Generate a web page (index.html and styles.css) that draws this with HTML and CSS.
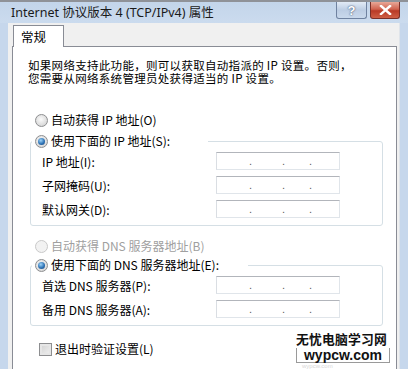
FILE: index.html
```html
<!DOCTYPE html>
<html lang="zh">
<head>
    <meta charset="utf-8">
    <title>Internet 协议版本 4 (TCP/IPv4) 属性</title>
    <link rel="stylesheet" href="styles.css">
</head>
<body>
    <div class="topline"></div>
    <div class="titlebar">
        <span class="title">Internet 协议版本 4 (TCP/IPv4) 属性</span>
        <div class="title-buttons">
            <div class="btn-help">?</div>
            <div class="btn-close">
                <svg width="13" height="10" viewBox="0 0 13 10"><path d="M2 1 L11 9 M11 1 L2 9" stroke="#fff" stroke-width="2.4" stroke-linecap="square"/></svg>
            </div>
        </div>
    </div>
    <div class="client">
        <div class="tab">常规</div>
        <div class="panel">
            <p class="intro">如果网络支持此功能，则可以获取自动指派的 IP 设置。否则，<br>您需要从网络系统管理员处获得适当的 IP 设置。</p>

            <div class="opt opt-first"><span class="radio"></span>自动获得 IP 地址(O)</div>
            <div class="group">
                <div class="opt group-head ip-head"><span class="radio checked"></span>使用下面的 IP 地址(S):</div>
                <div class="row row-first"><span class="label">IP 地址(I):</span><div class="ipbox"><i>.</i><i>.</i><i>.</i></div></div>
                <div class="row"><span class="label">子网掩码(U):</span><div class="ipbox"><i>.</i><i>.</i><i>.</i></div></div>
                <div class="row"><span class="label">默认网关(D):</span><div class="ipbox"><i>.</i><i>.</i><i>.</i></div></div>
            </div>

            <div class="opt opt-dns disabled"><span class="radio"></span>自动获得 DNS 服务器地址(B)</div>
            <div class="group group-dns">
                <div class="opt group-head dns-head"><span class="radio checked"></span>使用下面的 DNS 服务器地址(E):</div>
                <div class="row row-first"><span class="label">首选 DNS 服务器(P):</span><div class="ipbox"><i>.</i><i>.</i><i>.</i></div></div>
                <div class="row"><span class="label">备用 DNS 服务器(A):</span><div class="ipbox"><i>.</i><i>.</i><i>.</i></div></div>
            </div>

            <div class="opt opt-check"><span class="checkbox"></span>退出时验证设置(L)</div>
        </div>
    </div>
    <div class="watermark">
        <div class="wm-cn">无忧电脑学习网</div>
        <div class="wm-en">wypcw.com</div>
        <div class="wm-shadow">wypcw.com</div>
    </div>
</body>
</html>
```

FILE: styles.css
```css
body {
    margin: 0;
    width: 408px;
    height: 369px;
    overflow: hidden;
    background: #c6d7ec;
    font-family: "Noto Sans CJK SC", sans-serif;
    font-size: 12px;
    color: #000;
    position: relative;
}
.topline {
    height: 2px;
    background: #8f9298;
}
.titlebar {
    height: 21px;
    display: flex;
    justify-content: space-between;
    padding: 0 8px 0 11px;
    background: linear-gradient(#c3d5ea, #cbdbee);
}
.title {
    font-family: "Noto Sans", "Noto Sans CJK SC", sans-serif;
    font-size: 12.5px;
    line-height: 21px;
    color: #1a1a1a;
}
.title-buttons {
    display: flex;
    gap: 3px;
}
.btn-help, .btn-close {
    height: 16px;
    border-radius: 0 0 3px 3px;
    border: 1px solid #6f82a0;
    border-top: none;
    display: flex;
    align-items: center;
    justify-content: center;
}
.btn-help {
    width: 29px;
    background: linear-gradient(#e2ebf6, #bccde3 50%, #c9d9ec);
    color: #fff;
    font-family: "Liberation Sans", sans-serif;
    font-weight: bold;
    font-size: 13px;
    text-shadow: 0 0 2px #4d5f7c, 0 0 1px #4d5f7c;
}
.btn-close {
    width: 28px;
    border-color: #7a2f28;
    background: linear-gradient(#e8a797, #d0634f 45%, #b93a26 55%, #cf5f45);
}
.client {
    margin: 0 8px;
    height: 346px;
    background: #f0f0f0;
    padding: 2px 2px 0 4px;
    box-sizing: border-box;
    border-right: 1px solid #dfe4ea;
}
.tab {
    width: 51px;
    height: 22px;
    margin-left: 1px;
    margin-bottom: -1px;
    box-sizing: border-box;
    border: 1px solid #898c95;
    border-bottom: none;
    background: #fff;
    position: relative;
    padding-left: 7px;
    line-height: 21px;
    font-size: 12.5px;
}
.panel {
    background: #fff;
    border: 1px solid #898c95;
    border-bottom: none;
    height: 330px;
}
.intro {
    margin: 12px 0 0 15px;
    font-size: 11.5px;
    line-height: 13px;
    letter-spacing: 0.3px;
}
.opt {
    display: flex;
    align-items: center;
    height: 14px;
    line-height: 14px;
    white-space: nowrap;
}
.opt-first {
    margin: 28px 0 0 22px;
}
.opt-dns {
    margin: 13px 0 0 22px;
}
.disabled {
    color: #a0a0a0;
}
.radio {
    width: 11px;
    height: 11px;
    border-radius: 50%;
    border: 1px solid #8d8e90;
    background: radial-gradient(circle at 45% 40%, #fbfbfb, #dadada 70%, #cfcfcf);
    margin-right: 3px;
    display: flex;
    align-items: center;
    justify-content: center;
    flex: none;
}
.disabled .radio {
    border-color: #c9c9c9;
    background: #f2f2f2;
}
.radio.checked::after {
    content: "";
    width: 7px;
    height: 7px;
    border-radius: 50%;
    background: radial-gradient(circle at 40% 35%, #9fd4f8, #2f74b6 55%, #153f74);
}
.group {
    margin: 14px 13px 0 17px;
    border: 1px solid #d5dfe5;
    border-radius: 3px;
    padding-bottom: 7px;
}
.group-dns {
    margin-top: 12px;
    padding-bottom: 7px;
}
.group-head {
    margin: -8px 0 0 1px;
    padding-left: 3px;
    background: #fff;
    box-sizing: border-box;
}
.ip-head {
    width: 176px;
}
.dns-head {
    width: 216px;
}
.row {
    display: flex;
    align-items: center;
    height: 18px;
    margin-top: 6px;
    padding-left: 11px;
}
.row-first {
    margin-top: 4px;
}
.label {
    width: 174px;
    flex: none;
    white-space: nowrap;
}
.ipbox {
    width: 124px;
    height: 18px;
    box-sizing: border-box;
    border: 1px solid #e0e5ea;
    border-top-color: #b2b5bb;
    border-left-color: #dadee3;
    display: flex;
    padding-left: 32px;
}
.ipbox i {
    font-style: normal;
    font-family: "Liberation Sans", sans-serif;
    font-size: 11px;
    line-height: 17px;
    color: #606060;
    width: 2px;
}
.ipbox i + i {
    margin-left: 31px;
}
.ipbox i + i + i {
    margin-left: 25px;
}
.opt-check {
    margin: 16px 0 0 26px;
}
.checkbox {
    width: 11px;
    height: 11px;
    border: 1px solid #8d8e90;
    background: linear-gradient(135deg, #d0d0d0, #f2f2f2);
    box-shadow: inset 0 0 0 2px #e6e6e6;
    margin-right: 3px;
    flex: none;
}
.watermark {
    position: absolute;
    left: 296px;
    top: 330px;
    width: 94px;
}
.wm-cn {
    font-family: "Noto Sans CJK SC", sans-serif;
    font-weight: bold;
    font-size: 12.8px;
    line-height: 18px;
    letter-spacing: 0.2px;
    color: #111;
    white-space: nowrap;
}
.wm-en {
    border: 1px solid #9a9a9a;
    border-top: none;
    background: #fff;
    font-family: "Liberation Sans", sans-serif;
    font-weight: bold;
    font-size: 14px;
    line-height: 14px;
    text-align: center;
    color: #111;
}
.wm-shadow {
    font-family: "Liberation Sans", sans-serif;
    font-size: 6px;
    line-height: 6px;
    color: #d8d8d8;
    padding-left: 6px;
}
```
